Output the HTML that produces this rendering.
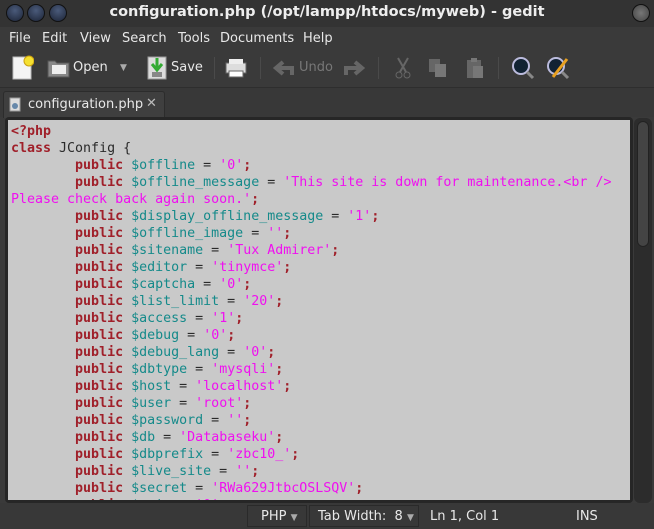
<!DOCTYPE html>
<html><head><meta charset="utf-8"><style>
*{margin:0;padding:0;box-sizing:border-box}
body{width:654px;height:529px;background:#3a3a3a;font-family:"DejaVu Sans","Liberation Sans",sans-serif;color:#e8e8e8;position:relative;overflow:hidden}
.abs{position:absolute}
.title{top:0;left:0;width:654px;height:27px;background:#333}
.title .t{position:absolute;left:0;right:0;top:4px;text-align:center;font-weight:bold;font-size:14.5px;color:#eee}
.btn{position:absolute;top:4px;width:18px;height:18px;border-radius:50%;background:radial-gradient(circle at 50% 35%,#4a5a7a,#1c2436);border:1px solid #111}
.menu{top:27px;left:0;width:654px;height:22px;font-size:13px}
.menu span{position:absolute;top:3px}
.tb{top:49px;left:0;width:654px;height:38px;background:#3a3a3a;font-size:13px}
.sep{position:absolute;top:8px;width:1px;height:22px;background:#2a2a2a;border-right:1px solid #4a4a4a}
.tabbar{top:87px;left:0;width:654px;height:30px;background:#383838;border-top:1px solid #2e2e2e}
.tab{position:absolute;left:3px;top:3px;width:162px;height:27px;background:#3f3f3f;border:1px solid #2c2c2c;border-bottom:none;border-radius:3px 3px 0 0;font-size:13px}
.frame{top:117px;left:5px;width:628px;height:386px;background:#262626;border-radius:4px}
.code{top:120px;left:8px;width:622px;height:380px;background:#c9c9c9;overflow:hidden;font-family:"DejaVu Sans Mono","Liberation Mono",monospace;font-size:13.3px;line-height:17px;padding:3px 0 0 3px;white-space:pre;color:#2a2a2a}
.k{color:#a0202a;font-weight:bold}.v{color:#158a8a}.s{color:#f010f0}
.sb{top:118px;left:634px;width:18px;height:385px;background:#2c2c2c;border-radius:6px}
.thumb{top:121px;left:637px;width:12px;height:126px;background:#444;border:1px solid #222;border-radius:6px}
.status{top:503px;left:0;width:654px;height:26px;background:#383838;font-size:13px}
.status span{position:absolute;top:6px}
.sbox{position:absolute;top:2px;height:22px;border:1px solid #2a2a2a}
</style></head><body>
<div class="abs title"><div class="btn" style="left:6px"></div><div class="btn" style="left:27px"></div><div class="btn" style="left:49px"></div>
<div class="btn" style="left:632px;background:radial-gradient(circle,#777,#444)"></div>
<div class="t">configuration.php (/opt/lampp/htdocs/myweb) - gedit</div></div>
<div class="abs menu"><span style="left:9px;top:4px">File</span><span style="left:42px;top:4px">Edit</span><span style="left:80px;top:4px">View</span><span style="left:122px;top:4px">Search</span><span style="left:178px;top:4px">Tools</span><span style="left:220px;top:4px">Documents</span><span style="left:303px;top:4px">Help</span></div>
<div class="abs tb">
<svg class="abs" style="left:10px;top:6px" width="24" height="26"><path d="M3 2h14l4 4v18H3z" fill="#f4f4f4" stroke="#bbb"/><circle cx="19" cy="6" r="5" fill="#f5e030" stroke="#caa010"/></svg>
<svg class="abs" style="left:47px;top:9px" width="24" height="20"><path d="M1 3h7l2 2h12v14H1z" fill="#888" stroke="#555"/><rect x="5" y="7" width="14" height="9" fill="#eee"/></svg>
<span class="abs" style="left:73px;top:11px">Open</span>
<span class="abs" style="left:120px;top:14px;font-size:9px;color:#aaa">▼</span>
<svg class="abs" style="left:146px;top:6px" width="22" height="26"><rect x="2" y="2" width="18" height="22" fill="#ddd" stroke="#999"/><path d="M11 3v11M6 9l5 6 5-6" stroke="#3a3" stroke-width="3" fill="none"/><rect x="6" y="17" width="10" height="5" fill="#888"/></svg>
<span class="abs" style="left:171px;top:11px">Save</span>
<div class="sep" style="left:214px"></div>
<svg class="abs" style="left:224px;top:8px" width="24" height="22"><rect x="2" y="6" width="20" height="10" fill="#ddd" stroke="#666"/><rect x="5" y="2" width="14" height="5" fill="#eee"/><rect x="5" y="14" width="14" height="6" fill="#fff" stroke="#666"/></svg>
<div class="sep" style="left:260px"></div>
<svg class="abs" style="left:273px;top:10px" width="22" height="18"><path d="M19 16V9H6M10 3L3 9l7 6" stroke="#666" stroke-width="4" fill="none"/></svg>
<span class="abs" style="left:299px;top:11px;color:#777">Undo</span>
<svg class="abs" style="left:343px;top:10px" width="22" height="18"><path d="M3 16V9h13M12 3l7 6-7 6" stroke="#666" stroke-width="4" fill="none"/></svg>
<div class="sep" style="left:378px"></div>
<svg class="abs" style="left:392px;top:7px" width="22" height="24"><path d="M6 2l8 14M16 2L8 16" stroke="#666" stroke-width="2"/><circle cx="7" cy="19" r="3" fill="none" stroke="#666"/><circle cx="15" cy="19" r="3" fill="none" stroke="#666"/></svg>
<svg class="abs" style="left:427px;top:8px" width="22" height="22"><rect x="2" y="2" width="11" height="13" fill="#666"/><rect x="8" y="7" width="11" height="13" fill="#777"/></svg>
<svg class="abs" style="left:464px;top:7px" width="22" height="24"><rect x="3" y="4" width="14" height="18" fill="#666"/><rect x="7" y="2" width="6" height="4" fill="#777"/><rect x="9" y="10" width="10" height="12" fill="#777"/></svg>
<div class="sep" style="left:498px"></div>
<svg class="abs" style="left:510px;top:6px" width="26" height="26"><circle cx="11" cy="11" r="8" fill="#123" stroke="#bbd" stroke-width="2"/><path d="M17 17l6 6" stroke="#888" stroke-width="3"/></svg>
<svg class="abs" style="left:545px;top:6px" width="26" height="26"><circle cx="11" cy="11" r="8" fill="#123" stroke="#bbd" stroke-width="2"/><path d="M17 17l6 6" stroke="#888" stroke-width="3"/><path d="M8 22L22 4" stroke="#e8a020" stroke-width="3"/></svg>
</div>
<div class="abs tabbar"><div class="tab">
<svg class="abs" style="left:5px;top:5px" width="12" height="15"><rect x="1" y="1" width="10" height="13" fill="#ddd" stroke="#999"/><circle cx="6" cy="9" r="3" fill="#68a"/></svg>
<span class="abs" style="left:24px;top:5px">configuration.php</span><span class="abs" style="left:142px;top:4px;color:#bbb">✕</span></div></div>
<div class="abs frame"></div>
<div class="abs code"><span class="k">&lt;?php</span>
<span class="k">class</span> JConfig {
        <span class="k">public</span> <span class="v">$offline</span> = <span class="s">'0'</span><span class="k">;</span>
        <span class="k">public</span> <span class="v">$offline_message</span> = <span class="s">'This site is down for maintenance.&lt;br /&gt;</span>
<span class="s">Please check back again soon.'</span><span class="k">;</span>
        <span class="k">public</span> <span class="v">$display_offline_message</span> = <span class="s">'1'</span><span class="k">;</span>
        <span class="k">public</span> <span class="v">$offline_image</span> = <span class="s">''</span><span class="k">;</span>
        <span class="k">public</span> <span class="v">$sitename</span> = <span class="s">'Tux Admirer'</span><span class="k">;</span>
        <span class="k">public</span> <span class="v">$editor</span> = <span class="s">'tinymce'</span><span class="k">;</span>
        <span class="k">public</span> <span class="v">$captcha</span> = <span class="s">'0'</span><span class="k">;</span>
        <span class="k">public</span> <span class="v">$list_limit</span> = <span class="s">'20'</span><span class="k">;</span>
        <span class="k">public</span> <span class="v">$access</span> = <span class="s">'1'</span><span class="k">;</span>
        <span class="k">public</span> <span class="v">$debug</span> = <span class="s">'0'</span><span class="k">;</span>
        <span class="k">public</span> <span class="v">$debug_lang</span> = <span class="s">'0'</span><span class="k">;</span>
        <span class="k">public</span> <span class="v">$dbtype</span> = <span class="s">'mysqli'</span><span class="k">;</span>
        <span class="k">public</span> <span class="v">$host</span> = <span class="s">'localhost'</span><span class="k">;</span>
        <span class="k">public</span> <span class="v">$user</span> = <span class="s">'root'</span><span class="k">;</span>
        <span class="k">public</span> <span class="v">$password</span> = <span class="s">''</span><span class="k">;</span>
        <span class="k">public</span> <span class="v">$db</span> = <span class="s">'Databaseku'</span><span class="k">;</span>
        <span class="k">public</span> <span class="v">$dbprefix</span> = <span class="s">'zbc10_'</span><span class="k">;</span>
        <span class="k">public</span> <span class="v">$live_site</span> = <span class="s">''</span><span class="k">;</span>
        <span class="k">public</span> <span class="v">$secret</span> = <span class="s">'RWa629JtbcOSLSQV'</span><span class="k">;</span>
        <span class="k">public</span> <span class="v">$gzip</span> = <span class="s">'0'</span><span class="k">;</span></div>
<div class="abs sb"></div><div class="abs thumb"></div>
<div class="abs status">
<div class="sbox" style="left:247px;width:60px"></div><div class="sbox" style="left:309px;width:110px"></div>
<span style="left:261px">PHP <small style="font-size:9px;color:#aaa">▼</small></span>
<span style="left:318px">Tab Width:&nbsp; 8 <small style="font-size:9px;color:#aaa">▼</small></span>
<span style="left:430px">Ln 1, Col 1</span>
<span style="left:576px">INS</span></div>
</body></html>
